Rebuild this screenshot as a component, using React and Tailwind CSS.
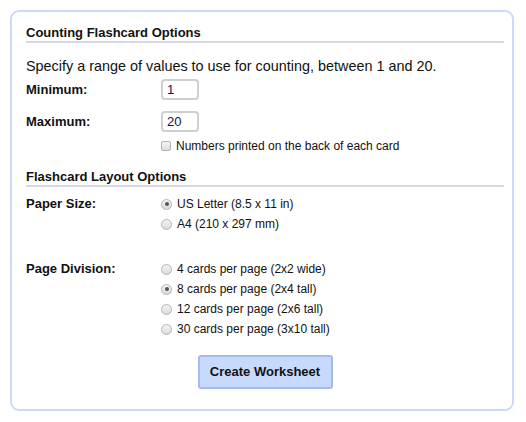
import React from 'react'

function Radio({ checked, label }) {
  return (
    <label className="flex h-[20px] items-center gap-[5px] text-[12px]">
      <span className="flex h-[11px] w-[11px] items-center justify-center rounded-full border border-[#b4b4b4] bg-gradient-to-b from-[#f4f4f4] to-[#dcdcdc]">
        {checked && <span className="h-[4px] w-[4px] rounded-full bg-[#555]" />}
      </span>
      {label}
    </label>
  )
}

function Heading({ children, className = '' }) {
  return (
    <h3 className={`border-b-2 border-[#d6d6e8] pb-[1px] text-[13px] font-bold leading-[15px] ${className}`}>
      {children}
    </h3>
  )
}

export default function App() {
  return (
    <div className="min-h-[422px] bg-white p-[10px] pr-[12px] font-['Liberation_Sans',Arial,sans-serif] text-[#111]">
      <div className="h-[401px] rounded-[9px] border-2 border-[#cbdaf8] pt-[13px] pl-[14px] pr-[8px]">
        <Heading>Counting Flashcard Options</Heading>
        <p className="mt-[14px] text-[14.4px] leading-[18px]">
          Specify a range of values to use for counting, between 1 and 20.
        </p>

        <div className="mt-[4px] grid grid-cols-[135px_1fr] items-center gap-y-[11px]">
          <span className="text-[13px] font-bold">Minimum:</span>
          <input
            defaultValue="1"
            className="h-[21px] w-[38px] rounded-[4px] border-2 border-[#cfcfcf] px-[4px] text-[13px] text-[#1c0f45] outline-none"
          />
          <span className="text-[13px] font-bold">Maximum:</span>
          <input
            defaultValue="20"
            className="h-[21px] w-[38px] rounded-[4px] border-2 border-[#cfcfcf] px-[4px] text-[13px] text-[#1c0f45] outline-none"
          />
        </div>
        <div className="mt-[7px] ml-[135px] flex h-[14px] items-center gap-[5px] text-[12px]">
          <span className="h-[10px] w-[10px] rounded-[2px] border border-[#b4b4b4] bg-gradient-to-b from-[#f4f4f4] to-[#dedede]" />
          Numbers printed on the back of each card
        </div>

        <Heading className="mt-[16px]">Flashcard Layout Options</Heading>

        <div className="mt-[7px] grid grid-cols-[135px_1fr]">
          <span className="flex h-[20px] items-center text-[13px] font-bold">Paper Size:</span>
          <div>
            <Radio checked label="US Letter (8.5 x 11 in)" />
            <Radio label="A4 (210 x 297 mm)" />
          </div>
        </div>

        <div className="mt-[25px] grid grid-cols-[135px_1fr]">
          <span className="flex h-[20px] items-center text-[13px] font-bold">Page Division:</span>
          <div>
            <Radio label="4 cards per page (2x2 wide)" />
            <Radio checked label="8 cards per page (2x4 tall)" />
            <Radio label="12 cards per page (2x6 tall)" />
            <Radio label="30 cards per page (3x10 tall)" />
          </div>
        </div>

        <div className="mt-[16px] flex justify-center">
          <button className="h-[34px] w-[135px] rounded-[3px] border-2 border-[#a3bbee] bg-[#c7d9fd] text-[13px] font-bold text-[#111]">
            Create Worksheet
          </button>
        </div>
      </div>
    </div>
  )
}
